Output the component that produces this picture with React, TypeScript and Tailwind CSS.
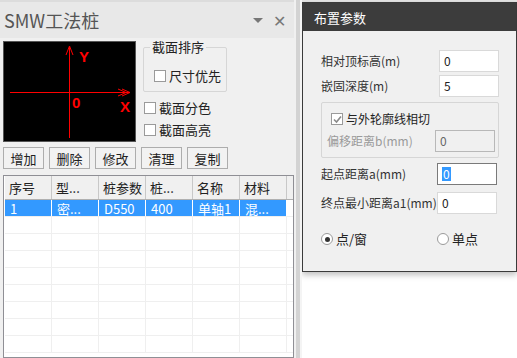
import React from "react";

const FONT = { fontFamily: '"Noto Sans CJK SC", "Liberation Sans", sans-serif' };

const COLS = ["序号", "型...", "桩参数", "桩...", "名称", "材料"];
const ROW = ["1", "密...", "D550", "400", "单轴1", "混..."];

const Check = ({ checked = false, disabled = false }: { checked?: boolean; disabled?: boolean }) => (
  <span className="w-[12px] h-[12px] border border-[#9a9a9a] bg-white flex items-center justify-center shrink-0">
    {checked && (
      <svg width="9" height="9" viewBox="0 0 9 9">
        <path d="M1 4.5 L3.5 7 L8 1.5" fill="none" stroke={disabled ? "#8a8a8a" : "#333"} strokeWidth="1.6" />
      </svg>
    )}
  </span>
);

const Radio = ({ checked = false }: { checked?: boolean }) => (
  <span className="w-[12px] h-[12px] rounded-full border border-[#9a9a9a] bg-white flex items-center justify-center shrink-0">
    {checked && <span className="w-[5px] h-[5px] rounded-full bg-[#333]" />}
  </span>
);

const Field = ({ label, value, focused = false, disabled = false }: { label: string; value: string; focused?: boolean; disabled?: boolean }) => (
  <div className="flex items-center justify-between h-[22px] whitespace-nowrap">
    <span className={`leading-[16px] ${disabled ? "text-[#9a9a9a]" : "text-[#333]"}`}>{label}</span>
    <div
      className={`w-[60px] h-[22px] shrink-0 border flex items-center pl-[4px] leading-[16px] ${
        focused ? "border-[#7a7a7a] bg-white" : disabled ? "border-[#b8b8b8] bg-[#f0f0f0] text-[#666]" : "border-[#d9d9d9] bg-white"
      }`}
    >
      {focused ? <span className="bg-[#3399ff] text-white leading-[14px] px-[1px]">{value}</span> : <span>{value}</span>}
    </div>
  </div>
);

export default function App() {
  return (
    <div className="w-[517px] h-[358px] flex bg-white text-[12px] text-[#222] overflow-hidden" style={FONT}>
      {/* left docked panel */}
      <div className="w-[294px] h-full flex flex-col bg-[#f0f0f0] shrink-0">
        <div className="h-[38px] bg-[#e8e8e8] border-t-2 border-[#dcdcdc] flex items-center pl-[4px] pr-[8px] shrink-0">
          <span className="text-[18px] text-[#555] leading-none">SMW工法桩</span>
          <span className="ml-auto w-0 h-0 border-l-[5px] border-r-[5px] border-t-[5px] border-l-transparent border-r-transparent border-t-[#777] mr-[10px]" />
          <span className="text-[16px] text-[#777] leading-none">✕</span>
        </div>

        <div className="flex pl-[3px] pt-[3px] gap-[7px] h-[104px] shrink-0">
          <div className="w-[133px] h-[101px] bg-black border border-[#555]">
            <svg width="131" height="99" viewBox="0 0 131 99">
              <g stroke="#ff0000" strokeWidth="1" fill="none">
                <line x1="65.5" y1="5" x2="65.5" y2="96" />
                <line x1="6" y1="50.5" x2="126" y2="50.5" />
                <path d="M62 13 L65.5 4 L69 13" />
                <path d="M118 47 L126 50.5 L118 54" />
                <path d="M114 47 L122 50.5 L114 54" />
              </g>
              <g fill="#ff0000" fontWeight="bold" fontSize="15" fontFamily="Liberation Sans, sans-serif">
                <text x="75" y="20">Y</text>
                <text x="68" y="66">0</text>
                <text x="116" y="70">X</text>
              </g>
            </svg>
          </div>
          <div className="flex flex-col text-[13px] leading-[14px] whitespace-nowrap">
            <div className="relative w-[84px] h-[45px] border border-[#d6d6d6] rounded-[2px] mt-[6px] pt-[22px] pl-[10px] shrink-0">
              <span className="absolute -top-[8px] left-[6px] bg-[#f0f0f0] px-[2px]">截面排序</span>
              <label className="flex items-center gap-[3px] h-[12px]">
                <Check />
                尺寸优先
              </label>
            </div>
            <label className="flex items-center gap-[3px] h-[12px] mt-[10px] ml-[1px]">
              <Check />
              截面分色
            </label>
            <label className="flex items-center gap-[3px] h-[12px] mt-[10px] ml-[1px]">
              <Check />
              截面高亮
            </label>
          </div>
        </div>

        <div className="flex gap-[5px] pl-[3px] mt-[5px] shrink-0">
          {["增加", "删除", "修改", "清理", "复制"].map((b) => (
            <button key={b} className="w-[41px] h-[22px] border border-[#adadad] bg-[#f2f2f2] text-[13px] leading-none">
              {b}
            </button>
          ))}
        </div>

        <div className="ml-[3px] mt-[6px] flex-1 border border-[#8f8f95] bg-white overflow-hidden">
          <div className="flex h-[24px] bg-[#f0f0f0] border-b border-[#b0b0b0] ml-[1px]">
            {COLS.map((c) => (
              <div key={c} className="w-[47px] border-r border-[#c8c8c8] flex items-center pl-[4px] text-[13px] leading-none">
                {c}
              </div>
            ))}
            <div className="flex-1" />
          </div>
          {Array.from({ length: 9 }).map((_, r) => (
            <div key={r} className="flex h-[17px] border-b border-[#efefef] ml-[1px]">
              {ROW.map((v, i) => (
                <div
                  key={i}
                  className={`w-[47px] border-r flex items-center pl-[5px] text-[13px] leading-none ${
                    r === 0 ? "bg-[#3399ff] text-white border-[#ffffff]" : "border-[#efefef]"
                  }`}
                >
                  {r === 0 ? v : ""}
                </div>
              ))}
              <div className="flex-1" />
            </div>
          ))}
        </div>
      </div>

      {/* splitter strip */}
      <div className="w-[8px] h-full flex shrink-0">
        <div className="w-[2px] bg-[#f0f0f0]" />
        <div className="w-[4px] bg-[#d3d3d3]" />
        <div className="w-[2px] bg-[#f4f4f4]" />
      </div>

      {/* floating dialog column */}
      <div className="w-[215px] shrink-0 flex flex-col bg-white overflow-hidden">
        <div className="h-[2px] bg-[#e4e4e4]" />
        <div className="h-[270px] border border-[#3a3a3a] bg-[#f0f0f0] shadow-[0_3px_6px_rgba(0,0,0,0.25)] flex flex-col">
          <div className="h-[28px] bg-[#3c3c3c] flex items-center pl-[11px] text-white text-[13px] leading-none">布置参数</div>
          <div className="flex flex-col pl-[18px] pr-[17px] pt-[19px] text-[12px]">
            <div className="flex flex-col gap-[3px]">
              <Field label="相对顶标高(m)" value="0" />
              <Field label="嵌固深度(m)" value="5" />
            </div>
            <div className="mt-[5px] border border-[#d6d6d6] rounded-[2px] h-[56px] pl-[5px] pr-[3px] pt-[8px] flex flex-col gap-[3px]">
              <label className="flex items-center gap-[3px] pl-[4px] h-[16px] leading-[16px]">
                <Check checked disabled />
                与外轮廓线相切
              </label>
              <Field label="偏移距离b(mm)" value="0" disabled />
            </div>
            <div className="flex flex-col gap-[7px] mt-[5px] pr-[2px]">
              <Field label="起点距离a(mm)" value="0" focused />
              <Field label="终点最小距离a1(mm)" value="0" />
            </div>
            <div className="flex items-center mt-[17px] h-[16px] leading-[16px] text-[13px]">
              <label className="flex items-center gap-[3px] w-[116px]">
                <Radio checked />
                点/窗
              </label>
              <label className="flex items-center gap-[3px]">
                <Radio />
                单点
              </label>
            </div>
          </div>
        </div>
      </div>
    </div>
  );
}
